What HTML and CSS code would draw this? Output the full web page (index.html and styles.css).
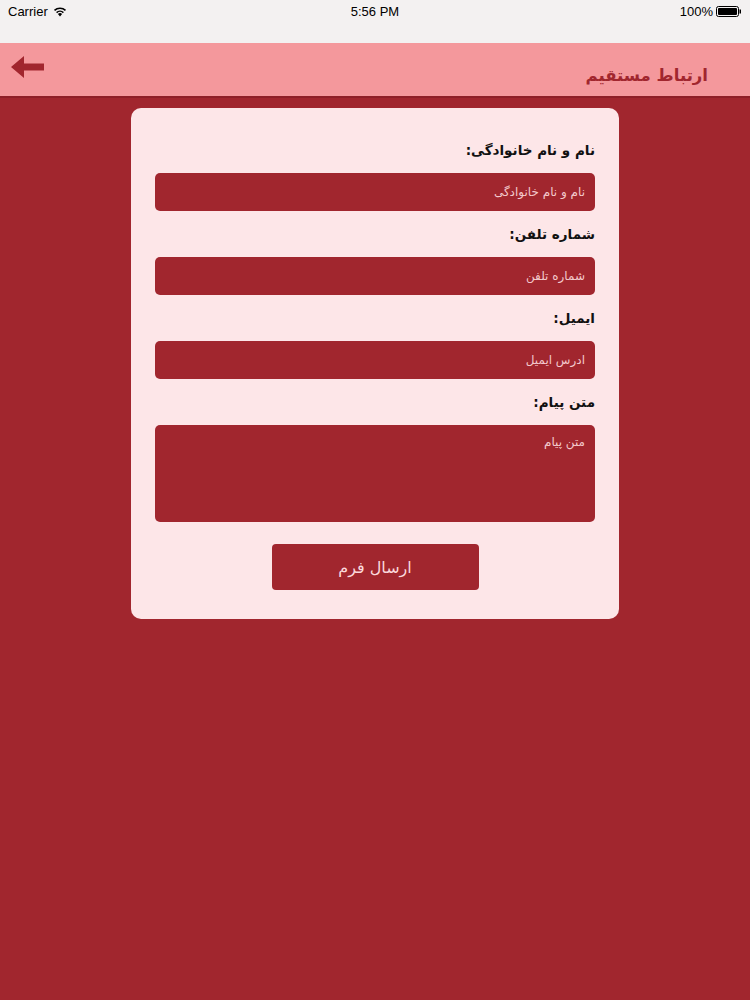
FILE: index.html
```html
<!DOCTYPE html>
<html lang="fa">

<head>
    <meta charset="UTF-8">
    <meta name="viewport" content="width=device-width, initial-scale=1.0">
    <title>ارتباط مستقیم</title>
    <link rel="stylesheet" href="styles.css">
</head>

<body>
    <div class="statusbar">
        <div class="sb-left">
            Carrier
            <svg class="wifi" width="14" height="11" viewBox="0 0 14 11">
                <path d="M7 10.5 L4.9 8.1 A3 3 0 0 1 9.1 8.1 Z" fill="#000" />
                <path d="M3.6 6.6 A4.9 4.9 0 0 1 10.4 6.6" stroke="#000" stroke-width="1.5" fill="none" />
                <path d="M1.5 4.4 A7.8 7.8 0 0 1 12.5 4.4" stroke="#000" stroke-width="1.5" fill="none" />
            </svg>
        </div>
        <div class="sb-center">5:56 PM</div>
        <div class="sb-right">
            100%
            <svg class="battery" width="26" height="11" viewBox="0 0 26 11">
                <rect x="0.5" y="0.5" width="22" height="10" rx="2" fill="none" stroke="#000" />
                <rect x="2" y="2" width="19" height="7" rx="1" fill="#000" />
                <rect x="23.5" y="3.5" width="1.5" height="4" fill="#000" />
            </svg>
        </div>
    </div>

    <div class="header">
        <svg class="back" width="34" height="22" viewBox="0 0 34 22">
            <path d="M0 11 L13 0 L13 7.5 L33 7.5 L33 14.5 L13 14.5 L13 22 Z" fill="#a1262e" />
        </svg>
        <h1>ارتباط مستقیم</h1>
    </div>

    <div class="page">
        <form class="card" dir="rtl">
            <div class="form-input">
                <label for="name">نام و نام خانوادگی:</label>
                <input id="name" type="text" placeholder="نام و نام خانوادگی">
            </div>
            <div class="form-input">
                <label for="phone">شماره تلفن:</label>
                <input id="phone" type="text" placeholder="شماره تلفن">
            </div>
            <div class="form-input">
                <label for="email">ایمیل:</label>
                <input id="email" type="text" placeholder="ادرس ایمیل">
            </div>
            <div class="form-input">
                <label for="message">متن پیام:</label>
                <textarea id="message" placeholder="متن پیام"></textarea>
            </div>
            <button type="submit">ارسال فرم</button>
        </form>
    </div>
</body>

</html>
```

FILE: styles.css
```css
* {
    padding: 0;
    margin: 0;
    box-sizing: border-box;
}

body {
    width: 750px;
    height: 1000px;
    background-color: #a1262e;
    font-family: "DejaVu Sans", sans-serif;
    overflow: hidden;
}

.statusbar {
    height: 43px;
    background-color: #f3f1f1;
    display: flex;
    justify-content: space-between;
    align-items: flex-start;
    padding: 4px 8px 0 8px;
    font-family: "Liberation Sans", sans-serif;
    font-size: 13px;
    color: #000;
}

.sb-left,
.sb-right {
    width: 120px;
    display: flex;
    align-items: center;
    gap: 5px;
}

.sb-right {
    justify-content: flex-end;
    gap: 3px;
}

.sb-center {
    font-size: 13px;
}

.header {
    height: 55px;
    background-color: #f4989c;
    border-bottom: 2px solid #8e1f27;
    display: flex;
    justify-content: space-between;
    align-items: flex-start;
    padding: 13px 42px 0 11px;
}

.back {
    display: block;
}

.header h1 {
    font-family: "DejaVu Sans", sans-serif;
    font-size: 16.5px;
    font-weight: bold;
    color: #a1262e;
    margin-top: 10px;
}

.page {
    padding-top: 10px;
    display: flex;
    justify-content: center;
}

.card {
    width: 488px;
    height: 511px;
    background-color: #fde6e8;
    border-radius: 10px;
    padding: 33px 24px 0 24px;
    display: flex;
    flex-direction: column;
}

.form-input {
    display: flex;
    flex-direction: column;
    margin-bottom: 14px;
}

.form-input label {
    font-size: 13.5px;
    font-weight: bold;
    color: #111;
    height: 18px;
    line-height: 18px;
    margin-bottom: 14px;
}

input,
textarea {
    width: 100%;
    height: 38px;
    border: none;
    outline: none;
    border-radius: 5px;
    background-color: #a1262e;
    color: #fde6e8;
    font-family: "DejaVu Sans", sans-serif;
    font-size: 12px;
    padding: 0 10px;
}

textarea {
    height: 97px;
    padding-top: 10px;
    resize: none;
}

input::placeholder,
textarea::placeholder {
    color: #f3c9cc;
}

button {
    align-self: center;
    width: 207px;
    height: 46px;
    margin-top: 8px;
    background-color: #a1262e;
    color: #fbd9dc;
    border: none;
    outline: none;
    border-radius: 4px;
    font-family: "DejaVu Sans", sans-serif;
    font-size: 16px;
}
```
